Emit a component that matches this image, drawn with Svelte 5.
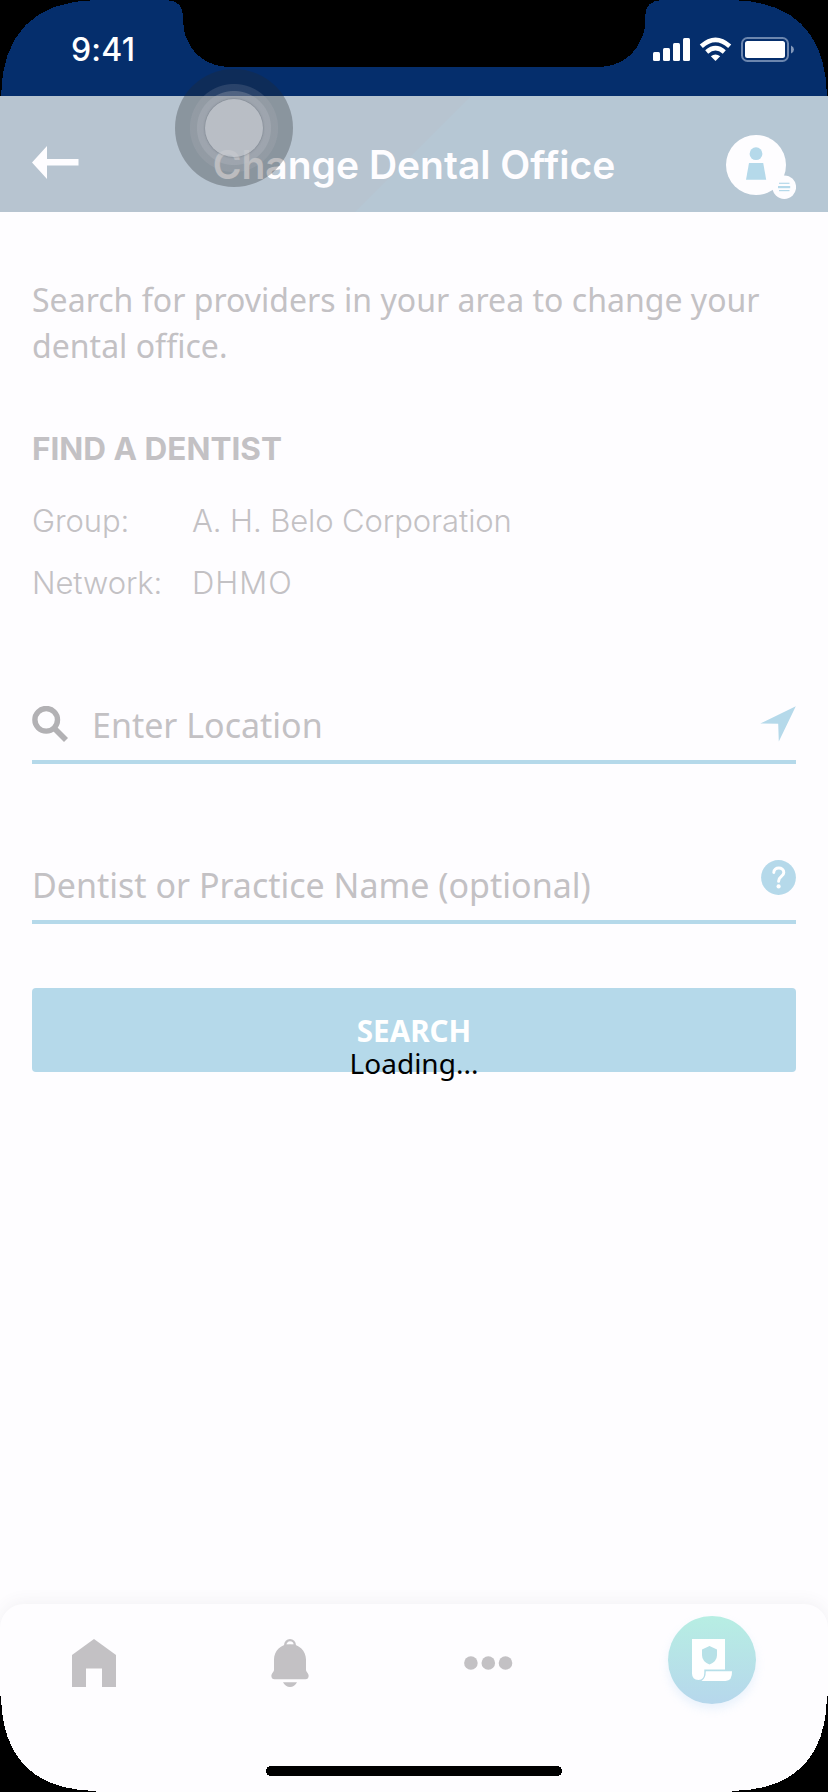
<script>
  const details = [
    { label: 'Group:', value: 'A. H. Belo Corporation' },
    { label: 'Network:', value: 'DHMO', wide: true }
  ];
</script>

<div class="screen">
  <div class="status">
    <span class="time">9:41</span>
    <svg class="indicators" width="144" height="28" viewBox="652 36 144 28">
      <g fill="#fff">
        <rect x="653" y="52" width="7" height="9" rx="1.5" />
        <rect x="663" y="48" width="7" height="13" rx="1.5" />
        <rect x="673" y="43" width="7" height="18" rx="1.5" />
        <rect x="683" y="38" width="7" height="23" rx="1.5" />
        <path d="M715.5 61 L710.8 56.2 Q715.5 52.6 720.2 56.2 Z" />
        <rect x="745" y="41" width="40" height="17" rx="2.5" />
      </g>
      <g fill="none" stroke="#fff" stroke-width="4.6">
        <path d="M701.3 46.2 Q715.5 33.4 729.7 46.2" />
        <path d="M706.7 52 Q715.5 44.4 724.3 52" />
      </g>
      <rect x="742" y="38" width="46" height="23" rx="5.5" fill="none" stroke="#6c86ae" stroke-width="2" />
      <path d="M791 45.5 Q794 47 794 49.5 Q794 52 791 53.5 Z" fill="#8398ba" />
    </svg>
  </div>

  <header>
    <svg width="47" height="33" viewBox="0 0 47 33" fill="#fefdff">
      <path d="M0 16.5 L15 0 V13 H46.5 V19.5 H15 V33 Z" />
    </svg>
    <h1>Change Dental Office</h1>
    <svg class="avatar" width="70" height="64" viewBox="726 135 70 64">
      <circle cx="756" cy="165" r="30" fill="#fefdff" />
      <circle cx="784.3" cy="187.2" r="11.8" fill="#fefdff" />
      <g fill="#b5d9ea">
        <circle cx="756" cy="153.7" r="6.4" />
        <path d="M749 163 H763.2 L766.2 179.8 H746 Z" />
        <rect x="779" y="182.7" width="10.5" height="1.2" />
        <rect x="778" y="186" width="12.2" height="2.2" />
        <rect x="779" y="190" width="10.5" height="1.2" />
      </g>
    </svg>
  </header>

  <main>
    <p class="intro">Search for providers in your area to change your dental office.</p>
    <h2>FIND A DENTIST</h2>
    <dl>
      {#each details as d}
        <div><dt>{d.label}</dt><dd class:wide={d.wide}>{d.value}</dd></div>
      {/each}
    </dl>

    <div class="field location">
      <svg width="36" height="36" viewBox="0 0 36 36" fill="none" stroke="#b2b1b4">
        <circle cx="14.2" cy="13.8" r="11.3" stroke-width="5.4" />
        <path d="M22 22 L34 34" stroke-width="5.6" />
      </svg>
      <span>Enter Location</span>
      <svg class="end" width="36" height="36" viewBox="0 0 36 36">
        <path d="M0.3 17.5 L35.8 0.3 L18.8 35.6 L18.2 17.8 Z" fill="#b5d9ea" />
      </svg>
    </div>
    <div class="field practice">
      <span>Dentist or Practice Name (optional)</span>
      <svg class="end help" width="35" height="35" viewBox="0 0 35 35">
        <circle cx="17.5" cy="17.5" r="17.4" fill="#b5d9ea" />
        <path d="M12.8 12.4 C12.6 6.6 23 6.6 22.8 12.4 C22.8 16.6 17.6 16.2 17.6 21.2" fill="none" stroke="#fff" stroke-width="3" stroke-linecap="round" />
        <circle cx="17.6" cy="26.4" r="2.1" fill="#fff" />
      </svg>
    </div>

    <button>SEARCH</button>
  </main>

  <nav>
    <svg class="home" width="44" height="48" viewBox="0 0 44 48" fill="#c3c1c4">
      <path d="M22 0 L44 16 V48 H30 V29.5 H14 V48 H0 V16 Z" />
    </svg>
    <svg class="bell" width="38" height="48" viewBox="0 0 38 48" fill="#c3c1c4">
      <path d="M19 1.2 A4.8 4.8 0 0 1 23.8 6 V8 H14.2 V6 A4.8 4.8 0 0 1 19 1.2 Z" fill="none" stroke="#c3c1c4" stroke-width="2.3" />
      <path d="M19 5 C28 5 35 12 35 20.5 V31 Q35 32 36 33.2 C39 36.5 37.5 40.3 34.5 40.3 H3.5 C0.5 40.3 -1 36.5 2 33.2 Q3 32 3 31 V20.5 C3 12 10 5 19 5 Z" />
      <path d="M16.2 5.2 Q19 1.8 21.8 5.2 Z" fill="#fefdff" />
      <path d="M12 43.2 H26 Q23.5 48 19 48 Q14.5 48 12 43.2 Z" />
    </svg>
    <svg class="more" width="49" height="14" viewBox="0 0 49 14" fill="#c3c1c4">
      <circle cx="6.9" cy="7" r="6.8" /><circle cx="24.3" cy="7" r="6.8" /><circle cx="41.5" cy="7" r="6.8" />
    </svg>
    <div class="plan">
      <svg width="88" height="88" viewBox="668 1616 88 88">
        <path d="M692 1639 H725 V1669.6 H704.3 V1673 Q704.3 1680 698.5 1680 Q692 1679.5 692 1673.5 Z" fill="#fff" />
        <path d="M705.8 1671.3 H732 Q732.3 1681 725.5 1681 H701.5 Q705.8 1678.5 705.8 1671.3 Z" fill="#fff" />
        <path d="M709.5 1646 L717 1649.6 V1655 Q717 1661.5 709.5 1664.5 Q702 1661.5 702 1655 V1649.6 Z" fill="#b7e1e7" />
      </svg>
    </div>
  </nav>

  <div class="loading">Loading...</div>
  <div class="touch"><i></i></div>
  <svg class="frame" width="828" height="1792" viewBox="0 0 828 1792">
    <path d="M0 0 H96 C34 1 2 34 1 96 H0 Z" />
    <path d="M828 0 H732 C794 1 826 34 827 96 H828 Z" />
    <path d="M167 0 C178 1 183 6 183 16 C183.500 28 184 34 187 39 C193 55 208 66 228 67 H600 C620 66 635 55 641 39 C644.500 33 645.500 26 645.500 14 C646 6 650 1 662 0 Z" />
    <path d="M0 1792 V1696 H1 C2 1758 34 1790 96 1791 V1792 Z" />
    <path d="M828 1792 V1696 H827 C826 1758 794 1790 732 1791 V1792 Z" />
    <rect x="266" y="1766" width="296" height="10" rx="5" />
  </svg>
</div>

<style>
  :global(body) { margin: 0; background: #fefdff; }
  .screen {
    position: relative;
    display: flex;
    flex-direction: column;
    width: 828px;
    height: 1792px;
    overflow: hidden;
    background: #fefdff;
    color: #c3c1c4;
    font-family: "Noto Sans", sans-serif;
  }
  .status {
    display: flex;
    justify-content: space-between;
    height: 96px;
    padding: 0 32px 0 71px;
    box-sizing: border-box;
    background: #052e6c;
    color: #fff;
  }
  .time { margin-top: 30px; font: 550 32px/40px Inter, sans-serif; letter-spacing: 0.2px; }
  .indicators { margin-top: 36px; }
  header {
    display: flex;
    align-items: center;
    justify-content: space-between;
    height: 116px;
    box-sizing: border-box;
    padding: 16px 32px 0;
    background: linear-gradient(135deg, #b7c4d0 49.8%, #b6c7d4 50%);
  }
  header h1 {
    margin: 6px 0 0 23px;
    color: #fefdff;
    font: 600 39px/48px Inter, sans-serif;
    white-space: nowrap;
  }
  .avatar { margin-top: 10px; }
  main { display: flex; flex-direction: column; padding: 0 32px; }
  .intro { margin: 65px 0 0; font-size: 32px; line-height: 46px; letter-spacing: 0.02px; }
  h2 { margin: 60px 0 0; font: 650 31.5px/40px Inter, sans-serif; white-space: nowrap; }
  dl { margin: 32px 0 0; font: 350 31px/40px Inter, sans-serif; letter-spacing: -0.1px; display: grid; gap: 22px; }
  dl div { display: grid; grid-template-columns: 160px 1fr; }
  dt, dd { margin: 0; white-space: nowrap; }
  .wide { letter-spacing: 1px; }
  .field {
    display: flex;
    align-items: center;
    height: 80px;
    border-bottom: 4px solid #b5d9ea;
    font-size: 34px;
    line-height: 48px;
    white-space: nowrap;
  }
  .location { margin-top: 77px; gap: 24px; }
  .field svg { margin-top: 8px; }
  .field span { margin-top: 10px; }
  .practice { margin-top: 76px; }
  .field .end { margin-left: auto; }
  .field .help { margin-top: -5px; }
  button {
    height: 84px;
    margin-top: 64px;
    padding: 1px 0 0;
    border: 0;
    border-radius: 4px;
    background: #b5d9ea;
    color: #fff;
    font: 700 29.6px/40px "Noto Sans", sans-serif;
  }
  nav {
    display: flex;
    align-items: flex-start;
    height: 188px;
    margin-top: auto;
    box-sizing: border-box;
    padding-left: 72px;
    border-radius: 24px 24px 0 0;
    background: #fefdff;
    box-shadow: 0 -2px 16px rgba(90, 80, 100, 0.07);
  }
  .home { margin-top: 35px; }
  .bell { margin: 35px 0 0 155px; }
  .more { margin: 52px 0 0 155px; }
  .plan {
    width: 88px;
    height: 88px;
    margin: 12px 0 0 155px;
    border-radius: 50%;
    background: linear-gradient(#b7eee3, #b6d7ec);
    box-shadow: 0 5px 10px rgba(150, 200, 240, 0.2);
  }
  .plan svg { display: block; }
  .loading {
    position: absolute;
    top: 1043px;
    left: 0;
    width: 828px;
    text-align: center;
    color: #000;
    font-size: 28px;
    line-height: 40px;
  }
  .touch {
    position: absolute;
    left: 175px;
    top: 69px;
    width: 118px;
    height: 118px;
    border-radius: 50%;
    background: radial-gradient(circle, rgba(190, 193, 200, 0.38) 36.5px, rgba(190, 193, 200, 0.16) 37.5px, rgba(190, 193, 200, 0.16) 43.500px, transparent 44.500px), rgba(38, 40, 42, 0.3);
  }
  .touch i {
    position: absolute;
    inset: 30px;
    border-radius: 50%;
    background: rgba(196, 199, 206, 0.72);
    box-shadow: 0 0 2px rgba(80, 90, 100, 0.7);
  }
  .frame { position: absolute; inset: 0; shape-rendering: crispEdges; }
</style>
